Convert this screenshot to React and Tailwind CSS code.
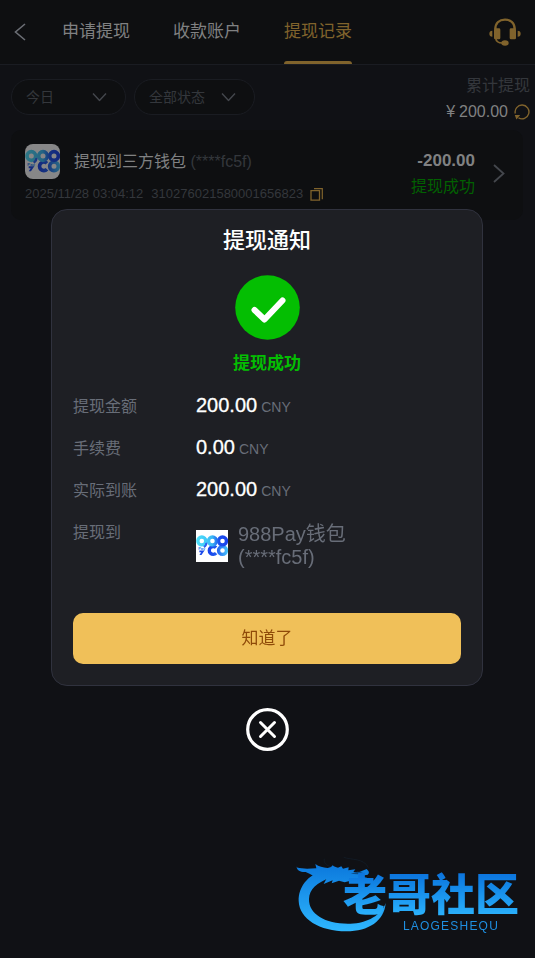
import React, { useId } from "react";

function BackIcon() {
  return (
    <svg width="12" height="18" viewBox="0 0 12 18" fill="none" aria-hidden="true">
      <path d="M11 1 1.500 9l9.500 8" stroke="#6b6e75" strokeWidth="1.600" />
    </svg>
  );
}

function HeadsetIcon() {
  return (
    <svg width="32" height="28" viewBox="0 0 96 84" fill="none" aria-hidden="true">
      <path d="M19 34C19 15 31 5 48 5s29 10 29 29" stroke="#80632c" strokeWidth="7" />
      <rect x="15" y="31" width="19" height="33" rx="4" fill="#80632c" />
      <rect x="62" y="31" width="19" height="33" rx="4" fill="#80632c" />
      <path d="M10 38a9 9 0 0 0 0 18zM86 38a9 9 0 0 1 0 18z" fill="#80632c" />
      <path d="M20 60c1 10 8 15 20 15" stroke="#80632c" strokeWidth="5" />
      <ellipse cx="48" cy="75" rx="11" ry="8" fill="#80632c" />
    </svg>
  );
}

function ChevronDown() {
  return (
    <svg
      className="pointer-events-none absolute right-[19px] top-1/2 -translate-y-1/2"
      width="15"
      height="9"
      viewBox="0 0 15 9"
      fill="none"
      aria-hidden="true"
    >
      <path d="m1 1 6.500 7L14 1" stroke="#44474d" strokeWidth="1.400" />
    </svg>
  );
}

function ChevronRight() {
  return (
    <svg width="12" height="19" viewBox="0 0 12 19" fill="none" aria-hidden="true">
      <path d="m1 1 9.500 8.500L1 18" stroke="#44474d" strokeWidth="1.800" />
    </svg>
  );
}

function RefreshIcon() {
  return (
    <svg width="16" height="16" viewBox="0 0 16 16" fill="none" aria-hidden="true">
      <path d="M1.300 9.500A6.900 6.900 0 1 1 4.500 13.900" stroke="#80632c" strokeWidth="1.400" />
      <path d="M.8 11h5.400L2.400 15.600z" fill="#80632c" />
    </svg>
  );
}

function CopyIcon() {
  return (
    <svg width="13" height="13" viewBox="0 0 13 13" fill="none" aria-hidden="true">
      <path d="M1 2.700h8.500v9.500H1z" stroke="#80632c" strokeWidth="1.300" />
      <path d="M4 .7h8.300v10.600" stroke="#80632c" strokeWidth="1.200" />
    </svg>
  );
}

function PayLogo({ className }) {
  const id = useId();
  const a = id + "a";
  const b = id + "b";
  return (
    <svg className={className} viewBox="0 0 105 105" fill="none" role="img" aria-label="988Pay">
      <defs>
        <linearGradient id={a} x1="0" y1="0" x2="105" y2="0" gradientUnits="userSpaceOnUse">
          <stop offset="0" stopColor="#4fe3fb" />
          <stop offset=".5" stopColor="#3bb9f5" />
          <stop offset=".72" stopColor="#1c50ee" />
          <stop offset="1" stopColor="#1840ea" />
        </linearGradient>
        <linearGradient id={b} x1="38" y1="0" x2="105" y2="0" gradientUnits="userSpaceOnUse">
          <stop offset="0" stopColor="#1740ea" />
          <stop offset=".45" stopColor="#1f5cf0" />
          <stop offset="1" stopColor="#48c8fb" />
        </linearGradient>
      </defs>
      <rect width="105" height="105" fill="#fff" />
      <g strokeWidth="11" stroke={"url(#" + b + ")"}>
        <path d="M66 58A13 13 0 1 0 66 76" />
        <circle cx="87" cy="67" r="13" />
      </g>
      <g strokeWidth="11" stroke={"url(#" + a + ")"}>
        <circle cx="19" cy="36" r="13" />
        <circle cx="54" cy="36" r="13" />
        <circle cx="87" cy="36" r="13" />
      </g>
      <path d="M34 42c1 6-2 10-8 14" stroke="#2b62ef" strokeWidth="7" />
      <path d="M11 67h17L18 82h-7l6-9h-6z" fill="#1b49ea" />
      <text x="7" y="65" fontSize="13" fontWeight="700" fill="#1f7ff0" fontFamily="Liberation Sans, Arial, sans-serif">
        Pay
      </text>
    </svg>
  );
}

function DragonIcon() {
  return (
    <svg width="92" height="80" viewBox="46 40 276 240" className="shrink-0" aria-hidden="true">
      <defs>
        <linearGradient id="dragon" x1="0" y1="70" x2="0" y2="275" gradientUnits="userSpaceOnUse">
          <stop offset="0" stopColor="#0b78dc" />
          <stop offset="1" stopColor="#2fb8ff" />
        </linearGradient>
      </defs>
      <g fill="url(#dragon)">
        <path d="M128 90C84 104 56 138 57 181c2 54 63 91 143 91 67 0 114-31 118-85-12 35-54 61-106 62-72 2-125-27-124-74 1-30 23-50 65-64z" />
        <path d="M50 80c22 6 38 4 60 3l-3-13c11 8 22 10 37 12l10-3 5-5c5 4 9 6 16 7l10-4 5 7 17-4-1 9 21-3-6 8 16 1 24-10c8 7 9 12 3 17l-28 5 26 4-5 13-36-6-26 7-17-5-22 8 3-9-27 11 9-17-23 6c-10-10-24-18-40-25-14 1-26-3-28-17z" />
      </g>
      <path d="M134 54c-3 14 8 21 20 24M192 50c24 8 62 3 74 31" stroke="#14202c" strokeWidth="2" fill="none" />
      <path d="m213 99 20-6 17 1-16 7z" fill="#0b4d87" />
    </svg>
  );
}

function Watermark() {
  return (
    <div className="pointer-events-none fixed bottom-6 right-4 flex items-start font-['Liberation_Sans','Noto_Sans_CJK_SC',sans-serif]">
      <DragonIcon />
      <div className="-ml-11 mt-[18px] flex flex-col">
        <span className="bg-linear-to-b from-[#0b72dc] to-[#2fb8ff] bg-clip-text text-[44px] leading-[48px] font-black text-transparent">
          老哥社区
        </span>
        <span className="mr-5 self-end text-xs leading-3 tracking-widest text-[#1f8fe0]">LAOGESHEQU</span>
      </div>
    </div>
  );
}

function Filter({ label, options, className }) {
  return (
    <div className={"relative h-9 " + className}>
      <select
        aria-label={label}
        className="h-full w-full appearance-none rounded-full border border-[#1a1c22] bg-[#0e0f11] pl-[14px] text-sm text-[#34373c]"
      >
        {options.map((o) => (
          <option key={o}>{o}</option>
        ))}
      </select>
      <ChevronDown />
    </div>
  );
}

function Tab({ children, active }) {
  return (
    <button
      type="button"
      className={
        active
          ? "relative flex h-full items-center text-[17px] text-[#80632c]"
          : "flex h-full items-center text-[17px] text-[#808182]"
      }
    >
      {children}
      {active && <span className="absolute inset-x-0 bottom-0 h-[3px] rounded-t-sm bg-[#80632c]" />}
    </button>
  );
}

function AmountRow({ label, amount }) {
  return (
    <div className="flex h-[42px] items-center">
      <dt className="w-[123px] text-base text-[#686d78]">{label}</dt>
      <dd className="flex items-baseline gap-1 pb-1">
        <span className="text-xl text-white [-webkit-text-stroke:0.3px_white]">{amount}</span>
        <span className="text-sm text-[#686d78]">CNY</span>
      </dd>
    </div>
  );
}

function NoticeDialog() {
  return (
    <div className="fixed inset-0 flex flex-col items-center justify-center pl-[51px] pr-[52px] pt-0.5">
      <section
        role="dialog"
        aria-labelledby="notice-title"
        className="w-full max-w-[432px] rounded-2xl border border-[#30323e] bg-[#1e1f24] px-[21px] pb-[21px] pt-[15px]"
      >
        <h2 id="notice-title" className="text-center text-[22px] leading-8 font-medium text-white">
          提现通知
        </h2>
        <svg className="mx-auto mt-[18px] block" width="65" height="65" viewBox="0 0 65 65" fill="none" aria-hidden="true">
          <circle cx="32.500" cy="32.500" r="32.300" fill="#04be02" />
          <path d="m19.500 35 10 9.500 18-19" stroke="#fff" strokeWidth="6" strokeLinecap="round" strokeLinejoin="round" />
        </svg>
        <p className="mt-3 text-center text-[17px] leading-6 font-bold text-[#04be02]">提现成功</p>
        <dl className="mt-[10px]">
          <AmountRow label="提现金额" amount="200.00" />
          <AmountRow label="手续费" amount="0.00" />
          <AmountRow label="实际到账" amount="200.00" />
          <div className="flex items-start pt-[9px]">
            <dt className="w-[123px] text-base text-[#686d78]">提现到</dt>
            <dd className="flex items-center gap-[10px] pt-0.5">
              <PayLogo className="size-8" />
              <span className="text-xl leading-[23px] text-[#686d78]">
                988Pay钱包
                <br />
                (****fc5f)
              </span>
            </dd>
          </div>
        </dl>
        <button
          type="button"
          className="mt-11 h-[51px] w-full rounded-[10px] bg-[#f0c059] text-[17px] text-[#8f4a08]"
        >
          知道了
        </button>
      </section>
      <button type="button" aria-label="关闭" className="mt-[22px]">
        <svg width="43" height="43" viewBox="0 0 43 43" fill="none" stroke="#fff" aria-hidden="true">
          <circle cx="21.500" cy="21.500" r="19.800" strokeWidth="3.200" />
          <path d="m14.500 14.500 14 14M28.500 14.500l-14 14" strokeWidth="3" strokeLinecap="round" />
        </svg>
      </button>
    </div>
  );
}

export default function App() {
  return (
    <div className="min-h-screen bg-[#101115] font-['Liberation_Sans','Noto_Sans_CJK_SC',sans-serif]">
      <header className="flex h-[65px] items-center border-b border-[#1a1c22] bg-[#0e0f11] pl-[14px] pr-[14px]">
        <button type="button" aria-label="返回">
          <BackIcon />
        </button>
        <nav className="ml-9 flex h-full flex-1 gap-[43px]">
          <Tab>申请提现</Tab>
          <Tab>收款账户</Tab>
          <Tab active>提现记录</Tab>
        </nav>
        <button type="button" aria-label="客服">
          <HeadsetIcon />
        </button>
      </header>

      <main>
        <div className="flex items-start gap-2 pl-[11px] pr-[5px]">
          <Filter label="日期" options={["今日"]} className="mt-[14px] w-[115px]" />
          <Filter label="状态" options={["全部状态"]} className="mt-[14px] w-[121px]" />
          <div className="ml-auto flex flex-col items-end pt-[9px]">
            <span className="text-base text-[#34373c]">累计提现</span>
            <div className="mt-0.5 flex items-center text-base text-[#808182]">
              <span className="mr-1">¥</span>
              <span>200.00</span>
              <button type="button" aria-label="刷新" className="ml-[6px]">
                <RefreshIcon />
              </button>
            </div>
          </div>
        </div>

        <article className="ml-[11px] mr-3 mt-[6px] flex h-[90px] items-start rounded-[10px] bg-[#0e0f11] px-[14px] pt-[14px]">
          <div className="flex-1">
            <div className="flex items-center">
              <PayLogo className="size-[35px] rounded-lg opacity-50" />
              <h3 className="ml-[14px] text-base text-[#808182]">
                提现到三方钱包 <span className="text-[#34373c]">(****fc5f)</span>
              </h3>
            </div>
            <div className="mt-[5px] flex items-center text-[13px] leading-5 text-[#34373c]">
              <time>2025/11/28 03:04:12</time>
              <span className="ml-2">310276021580001656823</span>
              <button type="button" aria-label="复制" className="ml-[7px]">
                <CopyIcon />
              </button>
            </div>
          </div>
          <div className="mt-1 flex flex-col items-end gap-0.5">
            <span className="text-[17px] leading-[25px] font-bold text-[#808182]">-200.00</span>
            <span className="text-base text-[#026001]">提现成功</span>
          </div>
          <button type="button" aria-label="详情" className="ml-[18px] mr-1 mt-5">
            <ChevronRight />
          </button>
        </article>
      </main>

      <NoticeDialog />
      <Watermark />
    </div>
  );
}
